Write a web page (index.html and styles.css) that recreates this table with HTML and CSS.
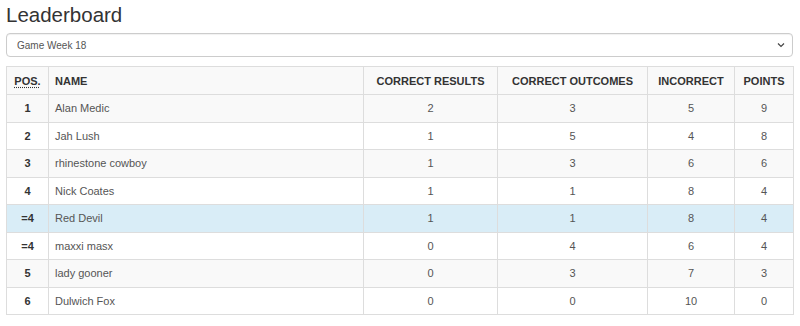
FILE: index.html
```html
<!DOCTYPE html>
<html>
<head>
<meta charset="utf-8">
<link rel="stylesheet" href="styles.css">
</head>
<body>
<div class="page">
  <h2 class="title">Leaderboard</h2>
  <div class="select">
    <span class="select-text">Game Week 18</span>
    <svg class="chev" width="8" height="6" viewBox="0 0 8 6"><path d="M1 1.5 L4 4.5 L7 1.5" fill="none" stroke="#444" stroke-width="1.2"/></svg>
  </div>
  <table class="board">
    <colgroup>
      <col class="c-pos"><col class="c-name"><col class="c-res"><col class="c-out"><col class="c-inc"><col class="c-pts">
    </colgroup>
    <thead>
      <tr><th><abbr class="abbr" title="Position">POS.</abbr></th><th class="left">NAME</th><th>CORRECT RESULTS</th><th>CORRECT OUTCOMES</th><th>INCORRECT</th><th>POINTS</th></tr>
    </thead>
    <tbody>
      <tr><td class="pos">1</td><td class="name">Alan Medic</td><td>2</td><td>3</td><td>5</td><td>9</td></tr>
      <tr><td class="pos">2</td><td class="name">Jah Lush</td><td>1</td><td>5</td><td>4</td><td>8</td></tr>
      <tr><td class="pos">3</td><td class="name">rhinestone cowboy</td><td>1</td><td>3</td><td>6</td><td>6</td></tr>
      <tr><td class="pos">4</td><td class="name">Nick Coates</td><td>1</td><td>1</td><td>8</td><td>4</td></tr>
      <tr class="info"><td class="pos">=4</td><td class="name">Red Devil</td><td>1</td><td>1</td><td>8</td><td>4</td></tr>
      <tr><td class="pos">=4</td><td class="name">maxxi masx</td><td>0</td><td>4</td><td>6</td><td>4</td></tr>
      <tr><td class="pos">5</td><td class="name">lady gooner</td><td>0</td><td>3</td><td>7</td><td>3</td></tr>
      <tr><td class="pos">6</td><td class="name">Dulwich Fox</td><td>0</td><td>0</td><td>10</td><td>0</td></tr>
    </tbody>
  </table>
</div>
</body>
</html>
```
FILE: styles.css
```css
html, body {
  margin: 0;
  padding: 0;
  background: #fff;
}
body {
  font-family: "Liberation Sans", Arial, sans-serif;
  color: #333;
}
.page {
  padding: 0 7px 0 6px;
}
.title {
  margin: 0;
  padding-top: 3px;
  font-size: 20.5px;
  font-weight: normal;
  line-height: 24px;
  color: #333;
  height: 30px;
}
.select {
  display: flex;
  align-items: center;
  justify-content: space-between;
  height: 22px;
  border: 1px solid #ccc;
  border-radius: 4px;
  padding: 0 7px 0 10px;
  font-size: 10px;
  color: #555;
  box-shadow: inset 0 1px 1px rgba(0,0,0,0.06);
}
.board {
  margin-top: 9px;
  width: 100%;
  border-collapse: collapse;
  table-layout: fixed;
  font-size: 11px;
}
.c-pos { width: 42px; }
.c-name { width: 315px; }
.c-res { width: 134px; }
.c-out { width: 150px; }
.c-inc { width: 87px; }
.c-pts { width: 59px; }
.board th, .board td {
  border: 1px solid #ddd;
  padding: 5px 6px;
  line-height: 16.5px;
  text-align: center;
  white-space: nowrap;
}
.board th {
  font-weight: bold;
  color: #333;
  padding-top: 5.5px;
  padding-bottom: 5px;
  background: #f9f9f9;
}
.board th.left, .board td.name {
  text-align: left;
}
.board td {
  color: #555;
}
.board td.pos {
  font-weight: bold;
  color: #333;
}
.abbr {
  text-decoration: underline dotted;
  text-underline-offset: 2px;
  cursor: help;
}
.board tbody tr:nth-child(odd) {
  background: #f9f9f9;
}
.board tbody tr.info {
  background: #d9edf7;
}
```
